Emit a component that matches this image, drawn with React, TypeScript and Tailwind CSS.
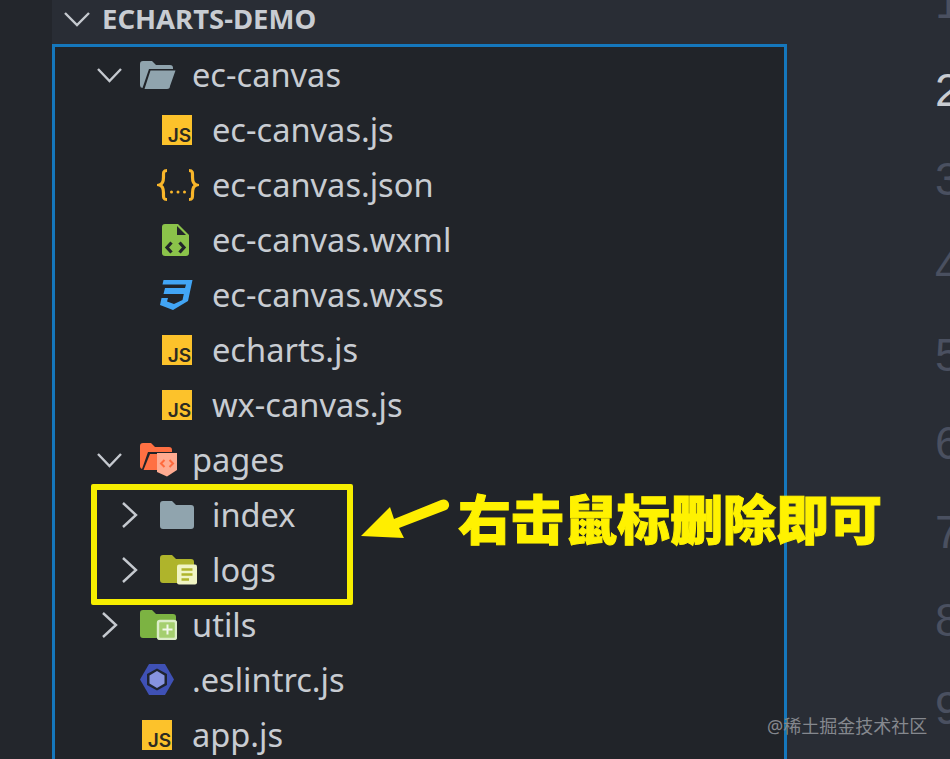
import type { ReactNode } from "react";

const Chevron = ({ open }: { open?: boolean }) => (
  <div className="w-[46px] shrink-0">
    {open ? (
      <svg width="32" height="16" viewBox="0 0 32 16" fill="none">
        <path d="M4 2 L15.5 14 L27 2" stroke="#c5c9cf" strokeWidth="2.4" />
      </svg>
    ) : (
      <svg width="26" height="28" viewBox="0 0 26 28" fill="none">
        <path d="M9 2 L22 14 L9 26" stroke="#c5c9cf" strokeWidth="2.4" />
      </svg>
    )}
  </div>
);

const JsIcon = () => (
  <div className="ml-[2px] flex h-[30px] w-[30px] items-end justify-end bg-[#fcc22b] pr-[1px] font-['Inter',sans-serif] text-[19px] leading-[18px] font-semibold text-[#2b2a22]">
    JS
  </div>
);

const JsonIcon = () => (
  <svg width="42" height="34" viewBox="0 0 42 34" fill="none" className="-ml-[3px]">
    <path d="M10 2.5 C6 2.5 6.5 5 6.5 9 C6.5 13 6 16 2.5 17 C6 18 6.5 21 6.5 25 C6.5 29 6 31.5 10 31.5" stroke="#f9b62a" strokeWidth="3.2" />
    <path d="M32 2.5 C36 2.5 35.5 5 35.5 9 C35.5 13 36 16 39.5 17 C36 18 35.5 21 35.5 25 C35.5 29 36 31.5 32 31.5" stroke="#f9b62a" strokeWidth="3.2" />
    <circle cx="14.5" cy="24" r="1.5" fill="#f9b62a" />
    <circle cx="21" cy="24" r="1.5" fill="#f9b62a" />
    <circle cx="27.5" cy="24" r="1.5" fill="#f9b62a" />
  </svg>
);

const XmlIcon = () => (
  <svg width="30" height="34" viewBox="0 0 30 34" fill="none" className="ml-[1px]">
    <path d="M4 1 H17 L28 12 V30 A3 3 0 0 1 25 33 H4 A3 3 0 0 1 1 30 V4 A3 3 0 0 1 4 1 Z" fill="#8bc34a" />
    <path d="M16 3 L25 12 H16 Z" fill="#22252b" />
    <path d="M10.5 19.5 L6 24.5 L10.5 29.5 M18.5 19.5 L23 24.5 L18.5 29.5" stroke="#22252b" strokeWidth="3.2" />
  </svg>
);

const CssIcon = () => (
  <svg width="34" height="32" viewBox="0 0 34 32" fill="none" className="-ml-[1px]">
    <path d="M4.5 1 H33.5 L29 22 L14 31 L1 26 L2.5 19 H9 L8 22.5 L15 25 L23.5 21 L24.8 15 H4.5 L6 9 H26 L27 5.5 H3.5 Z" fill="#42a5f5" />
  </svg>
);

const OpenFolder = () => (
  <svg width="36" height="28" viewBox="0 0 36 28" fill="none">
    <path d="M3 0 H12 L16 4 H30 A3 3 0 0 1 33 7 V8 H9 L2.5 27 A3 3 0 0 1 0 24 V3 A3 3 0 0 1 3 0 Z" fill="#90a4ae" />
    <path d="M10.5 9.5 H35.5 L30 25 A3 3 0 0 1 27 28 H4.5 Z" fill="#90a4ae" />
  </svg>
);

const PagesFolder = () => (
  <svg width="37" height="34" viewBox="0 0 37 34" fill="none">
    <path d="M3 0 H11 L15 4 H29 A3 3 0 0 1 32 7 V9 H8 L2 26 A3 3 0 0 1 0 23 V3 A3 3 0 0 1 3 0 Z" fill="#ff7043" />
    <path d="M10 11 H26 V27 H3.5 Z" fill="#ff7043" />
    <path d="M17 10 H37 V27 L27 33.5 L17 29 Z" fill="#ffab91" />
    <path d="M24.5 17 L21 20.5 L24.5 24 M29.5 17 L33 20.5 L29.5 24" stroke="#ff6a3d" strokeWidth="2" />
  </svg>
);

const PlainFolder = () => (
  <svg width="34" height="28" viewBox="0 0 34 28" fill="none">
    <path d="M3 0 H12 L16 4 H31 A3 3 0 0 1 34 7 V25 A3 3 0 0 1 31 28 H3 A3 3 0 0 1 0 25 V3 A3 3 0 0 1 3 0 Z" fill="#90a4ae" />
  </svg>
);

const LogsFolder = () => (
  <svg width="37" height="30" viewBox="0 0 37 30" fill="none">
    <path d="M3 0 H12 L16 4 H31 A3 3 0 0 1 34 7 V25 A3 3 0 0 1 31 28 H3 A3 3 0 0 1 0 25 V3 A3 3 0 0 1 3 0 Z" fill="#afb42b" />
    <rect x="17" y="9.5" width="20" height="20" rx="2" fill="#f0f4c3" />
    <path d="M21.5 14.5 H32.5 M21.5 19.5 H32.5 M21.5 24.5 H29" stroke="#afb42b" strokeWidth="2.6" />
  </svg>
);

const UtilsFolder = () => (
  <svg width="37" height="30" viewBox="0 0 37 30" fill="none">
    <path d="M3 0 H12 L16 4 H33 A3 3 0 0 1 36 7 V25 A3 3 0 0 1 33 28 H3 A3 3 0 0 1 0 25 V3 A3 3 0 0 1 3 0 Z" fill="#7cb342" />
    <rect x="18" y="11" width="18" height="18" rx="2" fill="#a5cf6f" stroke="#dcedc8" strokeWidth="2.4" />
    <path d="M27.5 14.5 V24.5 M22.5 19.5 H32.5" stroke="#f1f8e9" strokeWidth="2" />
  </svg>
);

const EslintIcon = () => (
  <svg width="34" height="31" viewBox="0 0 34 31" fill="none">
    <path d="M9 0 H25 L34 15.5 L25 31 H9 L0 15.5 Z" fill="#3f51b5" />
    <path d="M17 4.5 L27 10 V21 L17 26.5 L7 21 V10 Z" fill="#1f2430" />
    <path d="M17 7 L24.5 11.5 V19.5 L17 24 L9.5 19.5 V11.5 Z" fill="#8793df" />
  </svg>
);

const Row = ({
  depth,
  chevron,
  icon,
  label,
}: {
  depth: 1 | 2;
  chevron?: "open" | "closed";
  icon: ReactNode;
  label: string;
}) => (
  <div className={`flex h-[55px] items-center ${depth === 1 ? "pl-[39px]" : "pl-[59px]"}`}>
    {chevron ? <Chevron open={chevron === "open"} /> : <div className="w-[46px] shrink-0" />}
    <div className="flex w-[52px] shrink-0 items-center">{icon}</div>
    <span className="text-[32.6px] leading-[55px] whitespace-nowrap text-[#c8ccd2]">{label}</span>
  </div>
);

const lines = [1, 2, 3, 4, 5, 6, 7, 8, 9];

export default function App() {
  return (
    <div className="relative flex h-[759px] w-[950px] overflow-hidden bg-[#292d35] font-['Noto_Sans','Noto_Sans_CJK_SC',sans-serif]">
      <div className="w-[52px] shrink-0 bg-[#23262c]" />

      <div className="flex w-[735px] shrink-0 flex-col">
        <div className="flex h-[44px] shrink-0 items-center pb-[6px] pl-[11px]">
          <svg width="30" height="16" viewBox="0 0 30 16" fill="none" className="mr-[9px]">
            <path d="M2 2 L14 14 L26 2" stroke="#c5c9cf" strokeWidth="2.4" />
          </svg>
          <span className="text-[27.5px] leading-none font-bold text-[#c8ccd2]">ECHARTS-DEMO</span>
        </div>
        <div className="flex-1 border-x-[3px] border-t-[3px] border-[#1577bc] bg-[#212429]">
          <Row depth={1} chevron="open" icon={<OpenFolder />} label="ec-canvas" />
          <Row depth={2} icon={<JsIcon />} label="ec-canvas.js" />
          <Row depth={2} icon={<JsonIcon />} label="ec-canvas.json" />
          <Row depth={2} icon={<XmlIcon />} label="ec-canvas.wxml" />
          <Row depth={2} icon={<CssIcon />} label="ec-canvas.wxss" />
          <Row depth={2} icon={<JsIcon />} label="echarts.js" />
          <Row depth={2} icon={<JsIcon />} label="wx-canvas.js" />
          <Row depth={1} chevron="open" icon={<PagesFolder />} label="pages" />
          <Row depth={2} chevron="closed" icon={<PlainFolder />} label="index" />
          <Row depth={2} chevron="closed" icon={<LogsFolder />} label="logs" />
          <Row depth={1} chevron="closed" icon={<UtilsFolder />} label="utils" />
          <Row depth={1} icon={<EslintIcon />} label=".eslintrc.js" />
          <Row depth={1} icon={<JsIcon />} label="app.js" />
        </div>
      </div>

      <div className="-mt-[42px] flex-1 pl-[148px]">
        {lines.map((n) => (
          <div
            key={n}
            className={`h-[88.3px] font-['Liberation_Sans',sans-serif] text-[46px] leading-[88px] ${n === 2 ? "text-[#c9ccd1]" : "text-[#4a5060]"}`}
          >
            {n}
          </div>
        ))}
      </div>

      {/* annotation over the tree */}
      <div className="absolute top-[484px] left-[91px] h-[121px] w-[262px] rounded-[2px] border-[6px] border-[#f6ee00]" />
      <svg width="100" height="50" viewBox="0 0 100 50" className="absolute top-[495px] left-[355px]">
        <path d="M6 41 L35 12 L39 24 L86 5 A5.5 5.5 0 0 1 91 15 L44 33 L49 43 Z" fill="#ffee00" />
      </svg>
      <span className="absolute top-[483px] left-[458px] text-[53px] leading-[74px] font-black whitespace-nowrap text-[#fff200] [-webkit-text-stroke:1px_#fff200]">
        右击鼠标删除即可
      </span>
      <span className="absolute top-[714px] left-[767px] text-[18px] leading-[24px] whitespace-nowrap text-[#85888e]">
        @稀土掘金技术社区
      </span>
    </div>
  );
}
